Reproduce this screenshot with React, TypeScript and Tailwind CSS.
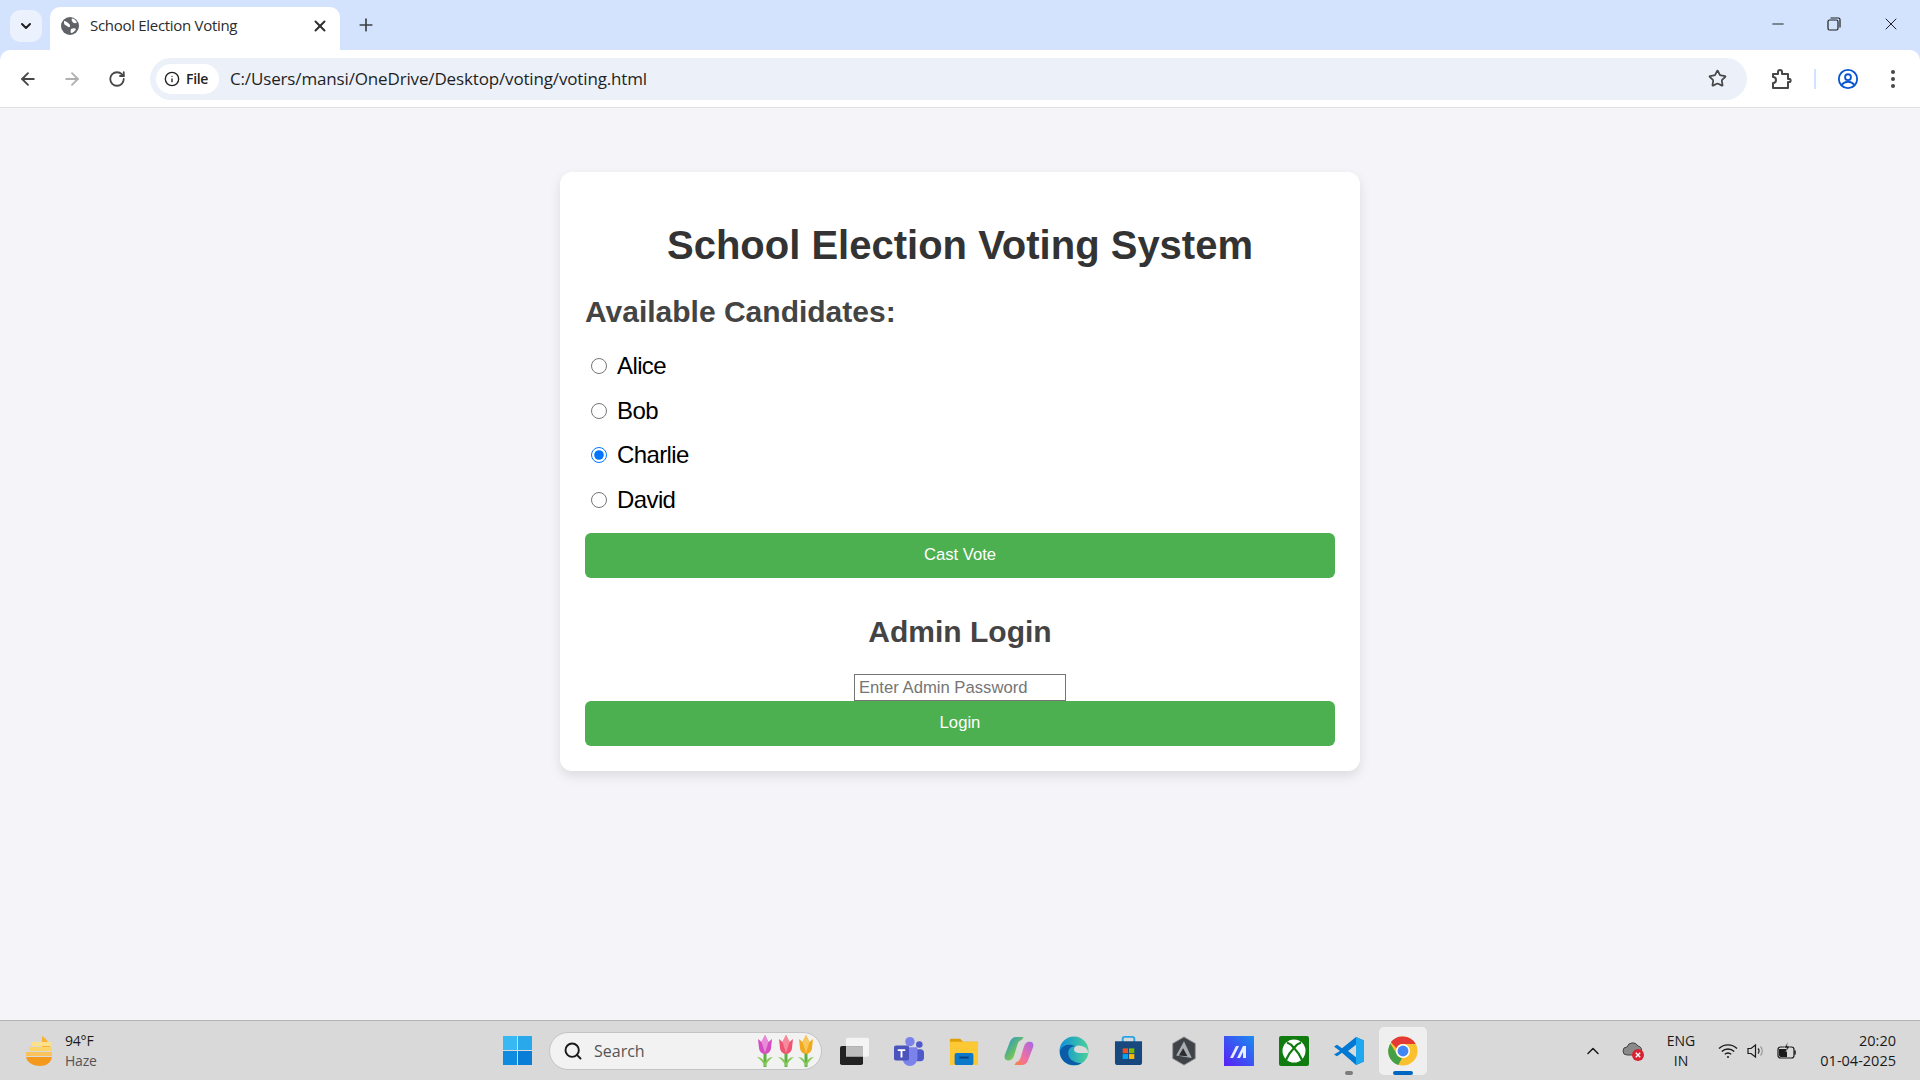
import { ArrowLeft, ArrowRight, ChevronDown, ChevronUp, Info, Minus, Plus, RotateCw, Search, Star, X } from 'lucide-react';

const candidates = ['Alice', 'Bob', 'Charlie', 'David'];

function TabStrip() {
  return (
    <div className="flex h-[50px] items-end bg-[#d3e3fd] pl-[10px] font-['Open_Sans',sans-serif]">
      <div className="mb-[8px] mr-[8px] flex h-[32px] w-[32px] items-center justify-center rounded-[10px] bg-[#ebf1fd]">
        <ChevronDown size={16} strokeWidth={3} className="text-[#1f1f1f]" />
      </div>
      <div className="flex h-[43px] w-[290px] items-center rounded-t-[10px] bg-white pb-[6px] pl-[11px] pr-[11px]">
        <svg viewBox="0 0 18 18" className="h-[18px] w-[18px]">
          <circle cx="9" cy="9" r="9" fill="#5f6368" />
          <path d="M3 4c2 0 3 1 4 2s2 1 2 3-2 1-3 0-3-1-3-3zM11 1.500c2 0 4 2 5 4-1 1-3 1-4 0s-2-3-1-4zM10 12c2-1 4-1 5 0-1 2-3 4-5 4-1-1 0-3 0-4z" fill="#fff" />
        </svg>
        <span className="ml-[11px] flex-1 text-[15px] tracking-[-0.3px] text-[#2b2b2b]">School Election Voting</span>
        <X size={18} strokeWidth={2.6} className="text-[#2f2f2f]" />
      </div>
      <div className="mb-[15px] ml-[16px] flex w-[20px] items-center justify-center">
        <Plus size={20} strokeWidth={2} className="text-[#3c4043]" />
      </div>
      <div className="mb-[16px] ml-auto flex items-center pr-[19px] text-[#1f1f1f]">
        <Minus size={18} strokeWidth={1.3} />
        <svg viewBox="0 0 14 14" className="ml-[40px] h-[14px] w-[14px]" fill="none" stroke="#1f1f1f" strokeWidth="1.2">
          <rect x="1" y="3" width="10" height="10" rx="1.5" />
          <path d="M3.5 1h8a1.5 1.5 0 0 1 1.5 1.5v8" />
        </svg>
        <X size={20} strokeWidth={1.2} className="ml-[40px]" />
      </div>
    </div>
  );
}

function Toolbar() {
  return (
    <div className="bg-[#d3e3fd]">
      <div className="flex h-[58px] items-center rounded-t-[10px] border-b border-[#dfdfdf] bg-white pl-[18px] pr-[18px]">
        <ArrowLeft size={20} strokeWidth={2.2} className="text-[#474747]" />
        <ArrowRight size={20} strokeWidth={2.2} className="ml-[24px] text-[#b0b0b0]" />
        <RotateCw size={18} strokeWidth={2.4} className="ml-[26px] text-[#474747]" />
        <div className="ml-[24px] flex h-[42px] w-[1597px] items-center rounded-full bg-[#ebf0f9] pl-[6px] pr-[20px] font-['Open_Sans',sans-serif]">
          <div className="flex h-[30px] w-[63px] items-center rounded-full bg-white pl-[8px]">
            <Info size={16} strokeWidth={2} className="text-[#1f1f1f]" />
            <span className="ml-[6px] text-[14px] font-semibold tracking-[-0.3px] text-[#1f1f1f]">File</span>
          </div>
          <span className="ml-[11px] text-[17px] tracking-[-0.15px] text-[#1f1f1f]">C:/Users/mansi/OneDrive/Desktop/voting/voting.html</span>
          <Star size={19} strokeWidth={2.2} className="ml-auto text-[#474747]" />
        </div>
        <svg viewBox="0 0 24 24" className="ml-[22px] h-[24px] w-[24px]" fill="none" stroke="#474747" strokeWidth="2" strokeLinejoin="round">
          <path d="M4 7h5V5a2 2 0 0 1 4 0v2h6v5h2a2 2 0 0 1 0 3h-2v6H4v-5a3 3 0 0 0 0-6z" />
        </svg>
        <div className="ml-[21px] h-[20px] w-[2px] bg-[#d3e3fd]" />
        <svg viewBox="0 0 24 24" className="ml-[21px] h-[22px] w-[22px]" fill="none" stroke="#0b57d0" strokeWidth="2">
          <circle cx="12" cy="12" r="10" />
          <circle cx="12" cy="10" r="3.2" />
          <path d="M5 18.5c2-2.6 4.5-3.5 7-3.5s5 .9 7 3.5" />
        </svg>
        <svg viewBox="0 0 4 18" className="ml-[32px] h-[18px] w-[4px]" fill="#474747">
          <circle cx="2" cy="2" r="2" />
          <circle cx="2" cy="9" r="2" />
          <circle cx="2" cy="16" r="2" />
        </svg>
      </div>
    </div>
  );
}

function VotingCard() {
  return (
    <div className="mx-auto mt-[64px] w-[800px] rounded-[12px] bg-white p-[25px] font-['Liberation_Sans',sans-serif] shadow-[0_5px_12px_rgba(0,0,0,0.1)]">
      <h1 className="mt-[25px] text-center text-[40px] font-bold leading-[46px] text-[#333]">School Election Voting System</h1>
      <h2 className="mt-[27px] text-[30px] font-bold leading-[34px] text-[#444]">Available Candidates:</h2>
      <div className="mt-[15px]">
        {candidates.map((name) => (
          <label key={name} className="flex h-[44.6px] items-center pl-[6px] text-[24px] text-black">
            <input type="radio" name="candidate" defaultChecked={name === 'Charlie'} className="m-0 h-[16px] w-[16px]" />
            <span className="ml-[10px] tracking-[-0.6px]">{name}</span>
          </label>
        ))}
      </div>
      <button className="mt-[11px] block h-[45px] w-full rounded-[6px] bg-[#4caf50] pb-[2px] text-[16.67px] text-white">Cast Vote</button>
      <h2 className="mt-[37px] text-center text-[30px] font-bold leading-[34px] text-[#444]">Admin Login</h2>
      <input
        type="password"
        placeholder="Enter Admin Password"
        className="mx-auto mt-[25px] block h-[27px] w-[212px] border border-[#767676] px-[4px] text-[16.67px] placeholder:text-[#757575]"
      />
      <button className="block h-[45px] w-full rounded-[6px] bg-[#4caf50] pb-[2px] text-[16.67px] text-white">Login</button>
    </div>
  );
}

function WeatherIcon() {
  return (
    <svg viewBox="0 0 32 32" className="h-[32px] w-[32px]">
      <path d="M18 1c5 3 8 8 9 14H18z" fill="#f9b233" />
      <rect x="8" y="7" width="19" height="4" fill="#fde08a" />
      <rect x="5" y="12" width="23" height="4" fill="#fbd46a" />
      <rect x="2" y="17" width="26" height="4" fill="#f9c25c" />
      <path d="M2 22h26c-1 6-6 9-12 9S3 28 2 22z" fill="#f39a1e" />
    </svg>
  );
}

function Tulips() {
  const tulip = (x: number, color: string, inner: string) => (
    <g key={x} transform={`translate(${x} 0)`}>
      <path d="M8 14v18" stroke="#5fae45" strokeWidth="3" />
      <path d="M8 32C6 27 3 24 0 22c4 0 7 3 8 6 1-3 4-6 8-6-3 2-6 5-8 10z" fill="#86c95a" />
      <path d="M1 4l3.500 3L8 0l3.500 7L15 4l-1 9a6 6 0 0 1-12 0z" fill={color} />
      <path d="M8 0l3.500 7L8 18 4.500 7z" fill={inner} />
    </g>
  );
  return (
    <svg viewBox="0 0 58 32" className="h-[32px] w-[58px]">
      {tulip(0, '#d54cc0', '#e98bd8')}
      {tulip(21, '#ef5472', '#f58a9c')}
      {tulip(41, '#f2a81f', '#f8c95a')}
    </svg>
  );
}

function Apps() {
  return (
    <div className="ml-[4px] flex items-center">
      {/* task view */}
      <div className="flex w-[55px] justify-center">
        <svg viewBox="0 0 30 34" preserveAspectRatio="none" className="h-[28px] w-[30px]">
          <rect x="7" y="1" width="23" height="23" rx="2" fill="#f4f4f4" />
          <rect x="1" y="11" width="23" height="23" rx="2" fill="#222" />
          <rect x="7" y="11" width="17" height="13" fill="#bdbdbd" />
        </svg>
      </div>
      {/* teams */}
      <div className="flex w-[55px] justify-center">
        <svg viewBox="0 0 32 32" className="h-[30px] w-[30px]">
          <circle cx="27" cy="9" r="3.5" fill="#5059c9" />
          <rect x="21" y="14" width="11" height="13" rx="4" fill="#5059c9" />
          <circle cx="17" cy="6" r="5" fill="#7b83eb" />
          <path d="M9 12h16v12a8 8 0 0 1-16 0z" fill="#7b83eb" />
          <rect x="0" y="10" width="16" height="16" rx="2" fill="#4b53bc" />
          <path d="M4 14h8v2H9v7H7v-7H4z" fill="#fff" />
        </svg>
      </div>
      {/* explorer */}
      <div className="flex w-[55px] justify-center">
        <svg viewBox="0 0 32 32" className="h-[30px] w-[30px]">
          <path d="M1 4a1 1 0 0 1 1-1h10l3 3h16v5H1z" fill="#e0a106" />
          <rect x="1" y="6" width="30" height="25" rx="1" fill="#fcc934" />
          <rect x="6" y="18" width="20" height="13" rx="2" fill="#0c78c9" />
          <rect x="11" y="22" width="10" height="2" fill="#083f77" />
        </svg>
      </div>
      {/* copilot */}
      <div className="flex w-[55px] justify-center">
        <svg viewBox="0 0 32 32" className="h-[30px] w-[30px]">
          <defs>
            <linearGradient id="c1" x1="0" y1="0" x2="1" y2="1">
              <stop offset="0" stopColor="#1c8fe0" />
              <stop offset="0.6" stopColor="#6fc25b" />
              <stop offset="1" stopColor="#f0c93c" />
            </linearGradient>
            <linearGradient id="c2" x1="1" y1="0" x2="0" y2="1">
              <stop offset="0" stopColor="#a566e8" />
              <stop offset="0.6" stopColor="#f26fa0" />
              <stop offset="1" stopColor="#f5893c" />
            </linearGradient>
          </defs>
          <path d="M13 1h8l-2 3c-3 1-4 3-5 6l-3 10c-1 4-3 6-6 6H4c-3 0-4-3-3-6L6 7c1-4 4-6 7-6z" fill="url(#c1)" />
          <path d="M19 31h-8l2-3c3-1 4-3 5-6l3-10c1-4 3-6 6-6h1c3 0 4 3 3 6l-5 13c-1 4-4 6-7 6z" fill="url(#c2)" />
        </svg>
      </div>
      {/* edge */}
      <div className="flex w-[55px] justify-center">
        <svg viewBox="0 0 32 32" className="h-[30px] w-[30px]">
          <defs>
            <linearGradient id="e1" x1="0" y1="0" x2="1" y2="0">
              <stop offset="0" stopColor="#0f8fd8" />
              <stop offset="1" stopColor="#49d29a" />
            </linearGradient>
          </defs>
          <circle cx="16" cy="16" r="15.500" fill="url(#e1)" />
          <path d="M14 31C6 30 1 24 1 16 4 9 12 8 17 11c-5 0-8 4-7 9 1 6 8 9 14 9-3 2-6 2-10 2z" fill="#0c5ba8" />
          <path d="M31 18c0-5-5-8-10-8-3 0-5 2-5 4 0 3 3 4 6 4 4 0 7 0 9 0z" fill="#d9d9d9" />
        </svg>
      </div>
      {/* store */}
      <div className="flex w-[55px] justify-center">
        <svg viewBox="0 0 30 34" preserveAspectRatio="none" className="h-[30px] w-[29px]">
          <path d="M9 7V3a2 2 0 0 1 2-2h8a2 2 0 0 1 2 2v4" fill="none" stroke="#2aa4e8" strokeWidth="2" />
          <path d="M1 6h28v24a3 3 0 0 1-3 3H4a3 3 0 0 1-3-3z" fill="#17497f" />
          <rect x="9" y="14" width="5.500" height="5.500" fill="#f25022" />
          <rect x="15.500" y="14" width="5.500" height="5.500" fill="#7fba00" />
          <rect x="9" y="20.500" width="5.500" height="5.500" fill="#00a4ef" />
          <rect x="15.500" y="20.500" width="5.500" height="5.500" fill="#ffb900" />
        </svg>
      </div>
      {/* hexagon app */}
      <div className="flex w-[55px] justify-center">
        <svg viewBox="0 0 30 34" preserveAspectRatio="none" className="h-[30px] w-[26px]">
          <path d="M15 1l13 7.500v17L15 33 2 25.500v-17z" fill="#3f4348" stroke="#8d9196" strokeWidth="1" />
          <path d="M15 6L6 22l18 3z" fill="#a9adb2" />
          <path d="M14 14L9 22l10 1z" fill="#2a2c30" />
        </svg>
      </div>
      {/* blue M tile */}
      <div className="flex w-[55px] justify-center">
        <svg viewBox="0 0 30 30" className="h-[30px] w-[30px]">
          <defs>
            <linearGradient id="m1" x1="0" y1="1" x2="1" y2="0">
              <stop offset="0" stopColor="#5a1ef5" />
              <stop offset="1" stopColor="#1a8cf0" />
            </linearGradient>
          </defs>
          <rect width="30" height="30" fill="url(#m1)" />
          <path d="M6 22l6-12h3L9 22zM13 22l6-12h3v12h-3v-6l-3 6z" fill="#e8edff" />
        </svg>
      </div>
      {/* xbox */}
      <div className="flex w-[55px] justify-center">
        <svg viewBox="0 0 30 30" className="h-[30px] w-[30px]">
          <rect width="30" height="30" rx="2" fill="#107c10" />
          <circle cx="15" cy="15" r="11.500" fill="#fff" />
          <path d="M8 6.500c3 1 5.500 3.500 7 5.500 1.500-2 4-4.500 7-5.500M15 12c-3 3-6 7-8 12M15 12c3 3 6 7 8 12" fill="none" stroke="#107c10" strokeWidth="2.200" />
          <path d="M15 17c-2.500 2-4.500 5-5.500 7.500 3.500 1.500 7.500 1.500 11 0-1-2.500-3-5.500-5.500-7.500z" fill="#fff" />
        </svg>
      </div>
      {/* vscode */}
      <div className="flex w-[55px] flex-col items-center">
        <svg viewBox="0 0 30 34" preserveAspectRatio="none" className="mt-[9px] h-[30px] w-[30px]">
          <path d="M22 1l8 4v24l-8 4L8 19l-5 4-3-2 6-4-6-5 3-2 5 4z" fill="#0078d4" />
          <path d="M22 1l8 4v24l-8 4z" fill="#1fa7f0" />
          <path d="M22 10l-8 7 8 7z" fill="#d9d9d9" />
        </svg>
        <div className="mt-[5px] h-[4px] w-[8px] rounded-full bg-[#7d7d7d]" />
      </div>
      {/* chrome, active */}
      <div className="ml-[3px] flex h-[48px] w-[48px] flex-col items-center rounded-[5px] bg-[#efefef]">
        <svg viewBox="0 0 32 32" className="mt-[9px] h-[30px] w-[30px]">
          <circle cx="16" cy="16" r="15.500" fill="#fbc02d" />
          <path d="M16 .5A15.500 15.500 0 0 1 29.500 8.500H16a7.500 7.500 0 0 0-7 4.500L3 6.500A15.500 15.500 0 0 1 16 .5z" fill="#e53935" />
          <path d="M2.500 8L9 19a7.500 7.500 0 0 0 6 4.500L11 31A15.500 15.500 0 0 1 2.500 8z" fill="#43a047" />
          <circle cx="16" cy="16" r="7.500" fill="#fff" />
          <circle cx="16" cy="16" r="5.800" fill="#4285f4" />
        </svg>
        <div className="mt-[5px] h-[4px] w-[20px] rounded-full bg-[#0067c0]" />
      </div>
    </div>
  );
}

function Tray() {
  return (
    <div className="ml-auto flex items-center pr-[24px] text-[#1a1a1a]">
      <ChevronUp size={20} strokeWidth={1.8} />
      <svg viewBox="0 0 22 20" className="ml-[19px] h-[20px] w-[22px]">
        <path d="M5 14a4 4 0 0 1 0-8 6 6 0 0 1 11-1 4 4 0 0 1 3 6v3z" fill="#8a8a8a" stroke="#444" strokeWidth="1" />
        <circle cx="16" cy="14" r="6" fill="#d92231" />
        <path d="M13.8 11.8l4.4 4.4M18.2 11.8l-4.4 4.4" stroke="#fff" strokeWidth="1.4" />
      </svg>
      <div className="ml-[17px] w-[40px] text-center text-[14px] leading-[20px]">
        <div>ENG</div>
        <div>IN</div>
      </div>
      <svg viewBox="0 0 20 16" className="ml-[17px] h-[16px] w-[20px]" fill="none" stroke="#1a1a1a" strokeWidth="1.4">
        <path d="M1 5.5a13 13 0 0 1 18 0M3.8 8.5a9 9 0 0 1 12.4 0M6.8 11.3a5 5 0 0 1 6.4 0" />
        <circle cx="10" cy="14" r="1" fill="#1a1a1a" stroke="none" />
      </svg>
      <svg viewBox="0 0 20 16" className="ml-[9px] h-[16px] w-[20px]" fill="none" stroke="#1a1a1a" strokeWidth="1.2">
        <path d="M1 5.5h3L8.500 2v12L4 10.500H1z" />
        <path d="M11 5.500a3.500 3.500 0 0 1 0 5" />
        <path d="M13.500 3.500a6.500 6.500 0 0 1 0 9" stroke="#9a9a9a" />
      </svg>
      <svg viewBox="0 0 20 18" className="ml-[10px] h-[18px] w-[20px]">
        <rect x="1" y="5" width="16" height="11" rx="2.500" fill="none" stroke="#1a1a1a" strokeWidth="1.200" />
        <path d="M18 8.500v4" stroke="#1a1a1a" strokeWidth="1.500" />
        <path d="M2 7h7l1-1v9H4a2 2 0 0 1-2-2z" fill="#1a1a1a" />
        <path d="M11 0L7 6h3l-1 4 4-6h-3z" fill="#1a1a1a" stroke="#d9d9d9" strokeWidth="0.500" />
      </svg>
      <div className="ml-[11px] w-[88px] text-right text-[14.5px] leading-[20px]">
        <div>20:20</div>
        <div>01-04-2025</div>
      </div>
    </div>
  );
}

function Taskbar() {
  return (
    <div className="flex h-[60px] items-center border-t border-[#b3b3b3] bg-[#d9d9d9] pl-[24px] font-['Open_Sans',sans-serif]">
      <WeatherIcon />
      <div className="ml-[9px] w-[100px] text-[14px] leading-[20px] tracking-[-0.2px]">
        <div className="text-[#1a1a1a]">94°F</div>
        <div className="text-[#555]">Haze</div>
      </div>
      <div className="ml-[338px] grid h-[29px] w-[29px] grid-cols-2 gap-px">
        <div className="bg-[#38b9f3]" />
        <div className="bg-[#2aa8ec]" />
        <div className="bg-[#0f8be0]" />
        <div className="bg-[#0a7dd6]" />
      </div>
      <div className="ml-[17px] flex h-[38px] w-[273px] items-center rounded-full border border-[#c4c4c4] bg-[#f2f2f2] pl-[13px] pr-[6px]">
        <Search size={20} strokeWidth={2.3} className="text-[#1a1a1a]" />
        <span className="ml-[11px] text-[16px] text-[#555]">Search</span>
        <div className="ml-auto">
          <Tulips />
        </div>
      </div>
      <Apps />
      <Tray />
    </div>
  );
}

export default function App() {
  return (
    <div className="flex h-screen flex-col overflow-hidden bg-[#f4f4f9]">
      <TabStrip />
      <Toolbar />
      <div className="flex-1">
        <VotingCard />
      </div>
      <Taskbar />
    </div>
  );
}
